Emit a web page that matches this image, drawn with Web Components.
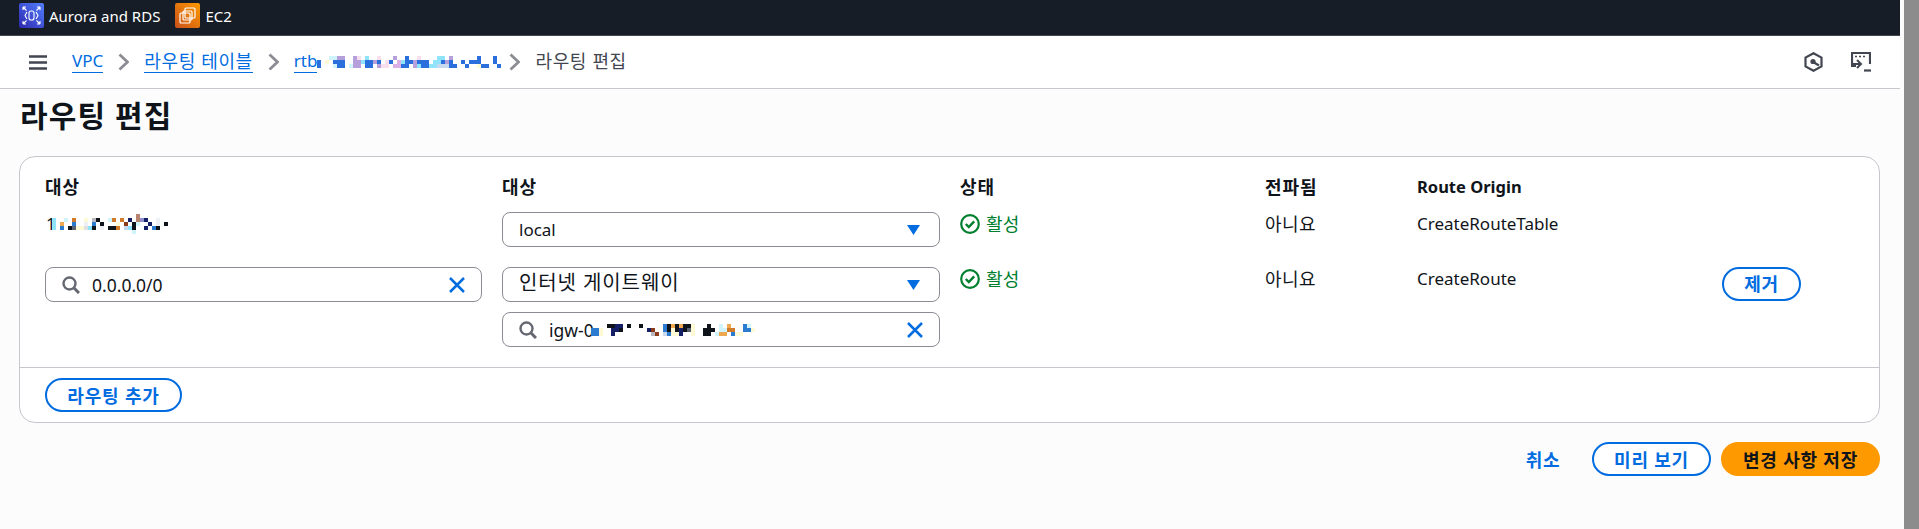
<!DOCTYPE html>
<html lang="ko">
<head>
<meta charset="utf-8">
<title>라우팅 편집</title>
<style>
  html, body { margin: 0; height: 100%; overflow: hidden; background: #fcfcfd; }
  body { font-family: "Noto Sans", "Noto Sans CJK KR", sans-serif; font-size: 17px; color: #0f141a; }
</style>
</head>
<body>
<app-shell>
  <top-bar>
    <service-chip kind="aurora">Aurora and RDS</service-chip>
    <service-chip kind="ec2">EC2</service-chip>
  </top-bar>
  <crumb-bar>
    <crumb-link>VPC</crumb-link>
    <crumb-sep></crumb-sep>
    <crumb-link ko>라우팅 테이블</crumb-link>
    <crumb-sep></crumb-sep>
    <crumb-link>rtb</crumb-link>
    <pixel-blur rows="...ccpp..pk.C..k...p..b..k....CC.p......b...b/b.y.bbb..ppCbbpb.kb.PCbbpbbb.CCbpb..b.bbb...b/b...cbb.cpp.bb.pkk.PPbb.pCbbCClllbb..b..ybb..b" style="margin-right:-7px"></pixel-blur>
    <crumb-sep></crumb-sep>
    <crumb-current>라우팅 편집</crumb-current>
  </crumb-bar>
  <page-title>라우팅 편집</page-title>
  <route-editor>
    <route-row head>
      <span class="ko">대상</span><span class="ko">대상</span><span class="ko">상태</span><span class="ko">전파됨</span><span class="en">Route Origin</span><span></span>
    </route-row>
    <route-row>
      <span class="masked">1<pixel-blur rows=".....................z/C..c.o..y.gd..co.o.n.zLn..f/C.O..B..f.B.d...y.R.dc..n.f.d/C.B.dGyyeCd.f.ddo.lCd..n.Bd/....................c" style="margin-left:-4px"></pixel-blur></span>
      <route-select>local</route-select>
      <status-ok>활성</status-ok>
      <span class="ko">아니요</span>
      <span>CreateRouteTable</span>
      <span></span>
    </route-row>
    <route-row>
      <search-field clearable>0.0.0.0/0</search-field>
      <div class="stack">
        <route-select ko>인터넷 게이트웨이</route-select>
        <search-field clearable>igw-0<pixel-blur rows="....ddnn.d..d.....BdOdOddy...d..c.O...Bc/BBy..nnd......nR..BdydndGy..ddd.ccoo..BBy/BBy..n.........gR.lByyn..y..dd.cOO.Byy" style="margin-left:-3px"></pixel-blur></search-field>
      </div>
      <status-ok>활성</status-ok>
      <span class="ko">아니요</span>
      <span>CreateRoute</span>
      <pill-button style="width:79px">제거</pill-button>
    </route-row>
    <pill-button slot="footer" style="width:137px">라우팅 추가</pill-button>
  </route-editor>
  <form-actions>
    <pill-button variant="link" style="width:72px;margin-right:3px">취소</pill-button>
    <pill-button style="width:119px">미리 보기</pill-button>
    <pill-button variant="primary" style="width:159px">변경 사항 저장</pill-button>
  </form-actions>
</app-shell>

<script>
  // small helper so every element just hands over its template string
  function shadow(el, html) {
    el.attachShadow({ mode: 'open' }).innerHTML = html;
  }

  const ICONS = {
    aurora: `<svg width="25" height="25" viewBox="0 0 25 25">
      <defs><linearGradient id="a" x1="0" y1="1" x2="1" y2="0"><stop offset="0" stop-color="#2e27ad"/><stop offset="1" stop-color="#527fff"/></linearGradient></defs>
      <rect width="25" height="25" rx="2" fill="url(#a)"/>
      <g fill="none" stroke="#fff" stroke-width="1.1">
        <rect x="10" y="8" width="5" height="9" rx="2"/>
        <path d="M8 9 6 12.500 8 16M17 9l2 3.500L17 16M4 4l3.500 3.500M4 4h3M4 4v3M21 4l-3.500 3.500M21 4h-3M21 4v3M4 21l3.500-3.500M4 21h3M4 21v-3M21 21l-3.500-3.500M21 21h-3M21 21v-3"/>
      </g></svg>`,
    ec2: `<svg width="25" height="25" viewBox="0 0 25 25">
      <defs><linearGradient id="e" x1="0" y1="1" x2="1" y2="0"><stop offset="0" stop-color="#c8511b"/><stop offset="1" stop-color="#ff9900"/></linearGradient></defs>
      <rect width="25" height="25" rx="2" fill="url(#e)"/>
      <g fill="none" stroke="#fff" stroke-width="1.200">
        <rect x="10" y="5" width="10" height="10" rx="1"/>
        <rect x="5" y="10" width="10" height="10" rx="1"/>
        <rect x="8" y="8" width="9" height="9" rx="1"/>
      </g></svg>`
  };

  class AppShell extends HTMLElement {
    constructor() {
      super();
      shadow(this, `<style>
        :host { display: flex; height: 529px; width: 100%; }
        .main { flex: 1; min-width: 0; padding-right: 4px; }
        .track { width: 15px; background: #8c8c8c; }
      </style>
      <div class="main"><slot></slot></div><div class="track"></div>`);
    }
  }

  class TopBar extends HTMLElement {
    constructor() {
      super();
      shadow(this, `<style>
        :host { display: flex; align-items: flex-start; gap: 15px; padding: 3px 0 0 19px; height: 32px;
          background: #161d26; border-bottom: 1px solid #424650; }
      </style><slot></slot>`);
    }
  }

  class ServiceChip extends HTMLElement {
    constructor() {
      super();
      shadow(this, `<style>
        :host { display: flex; align-items: center; gap: 5px; height: 25px; color: #fff; font-size: 15px; }
        svg { display: block; }
      </style>${ICONS[this.getAttribute('kind')] || ''}<slot></slot>`);
    }
  }

  class CrumbBar extends HTMLElement {
    constructor() {
      super();
      shadow(this, `<style>
        :host { display: flex; align-items: center; height: 52px; padding-left: 29px; padding-right: 29px;
          background: #fff; border-bottom: 1px solid #c6c6cd; }
        .menu { width: 18px; height: 15px; margin-right: 25px; display: block; }
        .crumbs { display: flex; align-items: center; flex: 1; }
        .tools { display: flex; align-items: center; gap: 28px; }
        svg { display: block; }
      </style>
      <svg class="menu" viewBox="0 0 18 15" fill="none" stroke="#424650" stroke-width="2.400"><path d="M0 1.500h18M0 7.500h18M0 13.500h18"/></svg>
      <div class="crumbs"><slot></slot></div>
      <div class="tools">
        <svg width="19" height="20" viewBox="0 0 19 20" fill="none" stroke="#424650" stroke-width="2.200">
          <path d="M9.500 1.200 17.500 5.600v8.800L9.500 18.800 1.500 14.400V5.600Z"/>
          <circle cx="9" cy="9.500" r="2.600" fill="#424650" stroke="none"/>
          <path d="m10 10.500 5 3"/>
        </svg>
        <svg width="20" height="20" viewBox="0 0 20 20" fill="none" stroke="#424650" stroke-width="2.200">
          <path d="M5 14H1V1h18v11"/>
          <path d="M4 4.500h2M8 4.500h2M12 4.500h2" stroke-width="1.500"/>
          <path d="m6 8 4 4-4 4M0 12h9" stroke-width="2"/>
          <path d="M13 18.500h7"/>
        </svg>
      </div>`);
    }
  }

  class CrumbLink extends HTMLElement {
    constructor() {
      super();
      shadow(this, `<style>
        :host { display: block; color: #006ce0; font-size: 17px; line-height: 22px; border-bottom: 1px solid #006ce0; margin-bottom: 2px; }
        :host([ko]) { font-size: 18px; letter-spacing: 0.65px; }
      </style><slot></slot>`);
    }
  }

  class CrumbSep extends HTMLElement {
    constructor() {
      super();
      shadow(this, `<style>
        :host { display: block; margin: 0 15px; }
        svg { display: block; }
      </style><svg width="11" height="18" viewBox="0 0 11 18" fill="none" stroke="#8c8c94" stroke-width="2.800"><path d="m1.500 1.500 8 7.500-8 7.500"/></svg>`);
    }
  }

  class CrumbCurrent extends HTMLElement {
    constructor() {
      super();
      shadow(this, `<style>
        :host { display: block; color: #424650; font-size: 18px; letter-spacing: 0.65px; line-height: 22px; margin-bottom: 2px; }
      </style><slot></slot>`);
    }
  }

  class PageTitle extends HTMLElement {
    constructor() {
      super();
      shadow(this, `<style>
        :host { display: block; padding: 8px 0 21px 20px; font-size: 30px; letter-spacing: 1.1px; line-height: 38px; font-weight: 700; }
      </style><slot></slot>`);
    }
  }

  class RouteEditor extends HTMLElement {
    constructor() {
      super();
      shadow(this, `<style>
        :host { display: block; margin: 0 20px 0 19px; background: #fff; border: 1px solid #c6c6cd; border-radius: 16px; }
        .rows { padding: 18px 0 20px 25px; display: flex; flex-direction: column; gap: 20px; }
        .foot { border-top: 1px solid #c6c6cd; padding: 10px 25px 10px; display: flex; }
      </style>
      <div class="rows"><slot></slot></div>
      <div class="foot"><slot name="footer"></slot></div>`);
    }
  }

  class RouteRow extends HTMLElement {
    constructor() {
      super();
      shadow(this, `<style>
        :host { display: grid; grid-template-columns: 437px 438px 285px 132px 285px 79px; column-gap: 20px;
          line-height: 24px; align-items: start; }
        :host([head]) { font-weight: 700; margin-bottom: -7px; }
        :host([head]) ::slotted(.ko) { letter-spacing: 1px; }
        :host([head]) ::slotted(.en) { font-size: 16.5px; }
        ::slotted(.ko) { font-size: 18px; letter-spacing: 0.5px; }
        ::slotted(.stack) { display: flex; flex-direction: column; gap: 10px; }
        ::slotted(.masked) { display: flex; align-items: center; height: 24px; margin-left: 1px; }
      </style><slot></slot>`);
    }
  }

  class SearchField extends HTMLElement {
    constructor() {
      super();
      shadow(this, `<style>
        :host { display: flex; align-items: center; height: 35px; box-sizing: border-box; padding: 0 16px;
          background: #fff; border: 1px solid #8c8c94; border-radius: 8px; font-size: 17.500px; }
        .text { flex: 1; display: flex; align-items: center; margin-left: 12px; white-space: nowrap; }
        svg { display: block; flex: none; }
      </style>
      <svg width="18" height="18" viewBox="0 0 18 18" fill="none" stroke="#656871" stroke-width="2.400"><circle cx="7.500" cy="7.500" r="6"/><path d="m12 12 5 5" stroke-width="3"/></svg>
      <div class="text"><slot></slot></div>
      <svg width="16" height="16" viewBox="0 0 16 16" fill="none" stroke="#006ce0" stroke-width="2.500"><path d="m1 1 14 14M15 1 1 15"/></svg>`);
    }
  }

  class RouteSelect extends HTMLElement {
    constructor() {
      super();
      shadow(this, `<style>
        :host { display: flex; align-items: center; height: 35px; box-sizing: border-box; padding: 0 19px 0 16px;
          background: #fff; border: 1px solid #8c8c94; border-radius: 8px; }
        :host([ko]) { font-size: 20px; letter-spacing: 0.9px; }
        :host([ko]) .text { margin-top: -3px; }
        .text { flex: 1; }
        svg { display: block; }
      </style>
      <div class="text"><slot></slot></div>
      <svg width="13" height="10" viewBox="0 0 13 10"><path d="M0 0h13L6.500 10Z" fill="#006ce0"/></svg>`);
    }
  }

  class StatusOk extends HTMLElement {
    constructor() {
      super();
      shadow(this, `<style>
        :host { display: flex; align-items: center; gap: 6px; color: #00802f; height: 24px; font-size: 18px; letter-spacing: 0.3px; }
        svg { display: block; }
      </style>
      <svg width="20" height="20" viewBox="0 0 20 20" fill="none" stroke="#00802f" stroke-width="2.200"><circle cx="10" cy="10" r="8.800"/><path d="m5.800 10 3 3 5.400-5.600" stroke-width="2.400"/></svg>
      <slot></slot>`);
    }
  }

  class PillButton extends HTMLElement {
    constructor() {
      super();
      shadow(this, `<style>
        :host { display: flex; align-items: center; justify-content: center; height: 34px; box-sizing: border-box;
          border: 2px solid #006ce0; border-radius: 20px; color: #006ce0; background: #fff;
          font-weight: 700; font-size: 18px; letter-spacing: 0.8px; white-space: nowrap; }
        :host([variant="link"]) { border-color: transparent; background: transparent; }
        :host([variant="primary"]) { border-color: #ff9900; background: #ff9900; color: #0f141a; }
      </style><slot></slot>`);
    }
  }

  class FormActions extends HTMLElement {
    constructor() {
      super();
      shadow(this, `<style>
        :host { display: flex; justify-content: flex-end; gap: 10px; margin: 19px 20px 0 0; }
      </style><slot></slot>`);
    }
  }

  // redacted ids in the screenshot, drawn as 4px mosaic cells
  const BLUR = {
    b: '#2a6fdc', p: '#b5a0dc', c: '#cff4fc', C: '#8fe3fb', k: '#f8dfee', y: '#fffad6', l: '#c8d8ef', P: '#dab0e6',
    d: '#0f141a', n: '#141f66', B: '#2b7bd0', L: '#9090c8', O: '#eea850', o: '#d07a2a', R: '#8b3a1a', G: '#5a6470',
    g: '#b8b8c0', f: '#eef2f6', e: '#e0e0e4', z: '#b8836f'
  };

  class PixelBlur extends HTMLElement {
    constructor() {
      super();
      const rows = this.getAttribute('rows').split('/');
      const width = Math.max(...rows.map(r => r.length)) * 4;
      let cells = '';
      rows.forEach((row, y) => {
        [...row].forEach((ch, x) => {
          if (BLUR[ch]) cells += `<rect x="${x * 4}" y="${y * 4}" width="4" height="4" fill="${BLUR[ch]}"/>`;
        });
      });
      shadow(this, `<style>
        :host { display: block; flex: none; line-height: 0; }
        svg { display: block; }
      </style><svg width="${width}" height="${rows.length * 4}" shape-rendering="crispEdges">${cells}</svg>`);
    }
  }

  customElements.define('app-shell', AppShell);
  customElements.define('top-bar', TopBar);
  customElements.define('service-chip', ServiceChip);
  customElements.define('crumb-bar', CrumbBar);
  customElements.define('crumb-link', CrumbLink);
  customElements.define('crumb-sep', CrumbSep);
  customElements.define('crumb-current', CrumbCurrent);
  customElements.define('page-title', PageTitle);
  customElements.define('route-editor', RouteEditor);
  customElements.define('route-row', RouteRow);
  customElements.define('search-field', SearchField);
  customElements.define('route-select', RouteSelect);
  customElements.define('status-ok', StatusOk);
  customElements.define('pill-button', PillButton);
  customElements.define('form-actions', FormActions);
  customElements.define('pixel-blur', PixelBlur);
</script>
</body>
</html>
